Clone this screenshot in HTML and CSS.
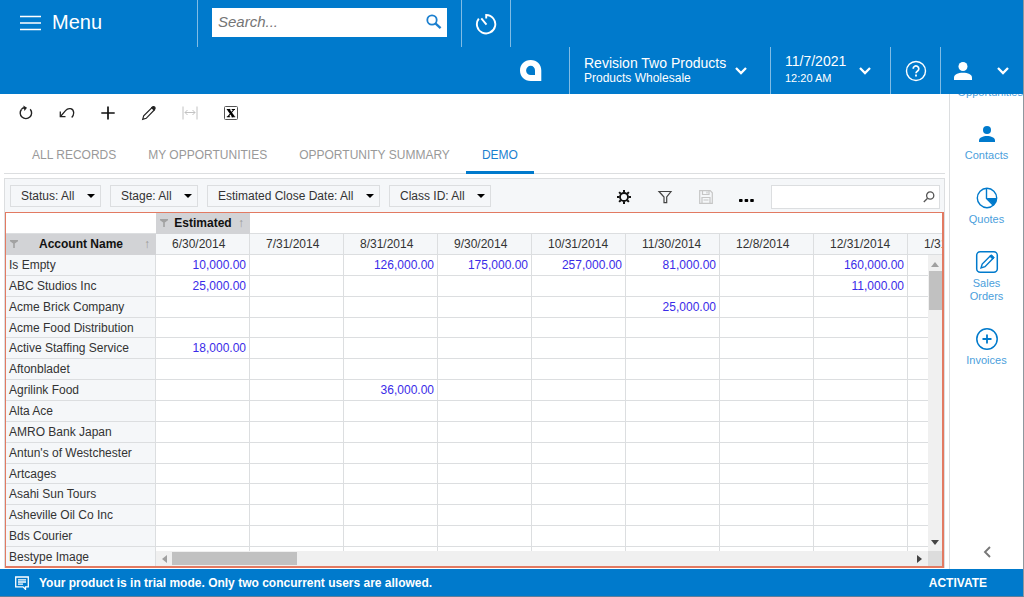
FILE: index.html
```html
<!DOCTYPE html>
<html lang="en">
<head>
<meta charset="utf-8">
<meta name="viewport" content="width=device-width, initial-scale=1">
<title>Opportunities</title>
<link rel="stylesheet" href="styles.css">
</head>
<body>
<div class="app">
  <header class="header">
    <div class="header-row header-top">
      <button class="menu-button" type="button">
        <svg width="21" height="16" viewBox="0 0 21 16" stroke="#fff" stroke-width="1.700"><path d="M0 1.500h21M0 8h21M0 14.500h21"/></svg>
        Menu
      </button>
      <div class="search-cell">
        <div class="search">
          <input class="search-input" type="text" placeholder="Search..." aria-label="Search">
          <svg width="16" height="16" viewBox="0 0 16 16" fill="none" stroke="#1b7fcf"><circle cx="6" cy="6" r="4.700" stroke-width="1.800"/><path d="M9.400 9.400l5.200 4.800" stroke-width="2.300"/></svg>
        </div>
      </div>
      <button class="history" type="button" aria-label="Recently visited">
        <svg width="22" height="22" viewBox="0 0 22 22" fill="none" stroke="#fff" stroke-width="1.900"><path d="M11.200 5.500V2A9.200 9.200 0 1 1 3.800 5.600M11.500 11.700L6.300 5.300"/></svg>
      </button>
    </div>
    <div class="header-row header-bottom">
      <svg class="brand" width="22" height="22" viewBox="0 0 22 22" fill="#fff" fill-rule="evenodd"><path d="M10.700 0C17 0 21.300 4.300 21.300 10.500V21H10.700C4.500 21 0 16.700 0 10.500S4.500 0 10.700 0zM10.700 5.800a4.600 4.600 0 0 0 0 9.200H15V10.400a4.400 4.400 0 0 0-4.300-4.600z"/></svg>
      <button class="company" type="button">
        <span class="two-line"><span class="line-main">Revision Two Products</span><span class="line-sub">Products Wholesale</span></span>
        <svg width="12" height="8" viewBox="0 0 12 8" fill="none" stroke="#fff" stroke-width="2.300"><path d="M1 1l5 5 5-5"/></svg>
      </button>
      <button class="date" type="button">
        <span class="two-line time-lines"><span class="line-main">11/7/2021</span><span class="line-time">12:20 AM</span></span>
        <svg width="12" height="8" viewBox="0 0 12 8" fill="none" stroke="#fff" stroke-width="2.300"><path d="M1 1l5 5 5-5"/></svg>
      </button>
      <button class="help" type="button" aria-label="Help">
        <svg width="22" height="22" viewBox="0 0 22 22" fill="none" stroke="#fff"><circle cx="11" cy="11" r="9.500" stroke-width="1.400"/><path d="M8.200 8.800a2.800 2.800 0 1 1 4.400 2.200c-1 .700-1.600 1.200-1.600 2.300" stroke-width="1.700"/><path d="M11 14.600v2" stroke-width="1.800"/></svg>
      </button>
      <button class="user" type="button" aria-label="User">
        <svg width="18" height="18" viewBox="0 0 18 18" fill="#fff"><circle cx="9" cy="4.500" r="4.500"/><path d="M0 18v-2.500C0 12.500 4 10.700 9 10.700s9 1.800 9 4.800V18z"/></svg>
        <svg width="12" height="8" viewBox="0 0 12 8" fill="none" stroke="#fff" stroke-width="2.300"><path d="M1 1l5 5 5-5"/></svg>
      </button>
    </div>
  </header>

  <div class="body">
    <main class="main">
      <div class="toolbar">
        <button type="button" aria-label="Refresh"><svg width="16" height="16" viewBox="0 0 16 16" fill="none" stroke="#222" stroke-width="1.400"><path d="M3.600 4.200A5.700 5.700 0 1 0 12.200 4.200"/><path d="M3.600 3.900C4.600 3 5.600 2.700 7 2.700"/><path d="M5.300.4L9 2.700 6.500 6z" fill="#222" stroke="none"/></svg></button>
        <button type="button" aria-label="Undo"><svg width="16" height="16" viewBox="0 0 16 16" fill="none" stroke="#222" stroke-width="1.300"><path d="M1.500 11.500L6.500 5.700C9.500 2 14.500 3.500 14.700 7.700c0 2-.7 3.500-2 4.800"/><path d="M1.300 6.500v5.200h5.200"/></svg></button>
        <button type="button" aria-label="Add"><svg width="16" height="16" viewBox="0 0 16 16" stroke="#111" stroke-width="1.700"><path d="M8 1.500v13M1.300 8h13.400"/></svg></button>
        <button type="button" aria-label="Edit"><svg width="16" height="16" viewBox="0 0 16 16" fill="none" stroke="#222" stroke-width="1.200"><path d="M1.700 14.300l1-3.600L11 2.600l2.300 2.300L5.200 13.300z"/><path d="M10.700 2.700c1-1.400 2.100-1.500 2.900-.7s.7 1.900-.6 3z" fill="#222"/></svg></button>
        <button type="button" aria-label="Fit width" disabled><svg width="16" height="16" viewBox="0 0 16 16" fill="none" stroke="#c2c2c2"><path d="M1 1.500v13M15 1.500v13M3 7.500h10M5.500 5L3 7.500 5.500 10M10.500 5L13 7.500 10.500 10"/></svg></button>
        <button type="button" aria-label="Export to Excel"><svg width="16" height="16" viewBox="0 0 16 16" fill="none" stroke="#555"><rect x="1.500" y="1.500" width="13" height="13" rx="1"/><path d="M5.300 4.500l5.200 7.200" stroke="#000" stroke-width="2.400"/><path d="M11 4.500L5 11.700M3.800 4.500h3.500M8.700 4.500h3.300M3.800 11.700h3.300M8.500 11.700h3.700" stroke="#000" stroke-width="1.100"/></svg></button>
      </div>
      <nav class="tabs">
        <a href="#">ALL RECORDS</a>
        <a href="#">MY OPPORTUNITIES</a>
        <a href="#">OPPORTUNITY SUMMARY</a>
        <a class="active" href="#" aria-current="page">DEMO</a>
      </nav>
      <section class="panel">
        <div class="filters">
          <div class="select"><select aria-label="Status"><option>Status: All</option></select></div>
          <div class="select"><select aria-label="Stage"><option>Stage: All</option></select></div>
          <div class="select"><select aria-label="Estimated Close Date"><option>Estimated Close Date: All</option></select></div>
          <div class="select"><select aria-label="Class ID"><option>Class ID: All</option></select></div>
          <div class="tools">
            <button type="button" aria-label="Settings"><svg width="16" height="16" viewBox="0 0 16 16" fill="none" stroke="#111"><circle cx="8" cy="8" r="4" stroke-width="1.800"/><path d="M8 1v2.500M8 12.500V15M1 8h2.500M12.500 8H15M3.100 3.100l1.700 1.700M11.200 11.200l1.700 1.700M3.100 12.900l1.700-1.700M11.200 4.800l1.700-1.700" stroke-width="2"/></svg></button>
            <button type="button" aria-label="Filter"><svg width="16" height="16" viewBox="0 0 16 16" fill="none" stroke="#444" stroke-width="1.200"><path d="M2 2.500h12L9.700 8v5.700H7V8z"/></svg></button>
            <button type="button" aria-label="Save" disabled><svg width="16" height="16" viewBox="0 0 16 16" fill="none" stroke="#c6c6c6" stroke-width="1.200"><path d="M1.700 1.700h10.500l2.100 2.100v10.500H1.700z"/><path d="M4.500 2v3.500h6.500V2M9 2.500v2M4 14V8.500h8V14M5.500 11h5"/></svg></button>
            <button type="button" aria-label="More"><svg width="16" height="16" viewBox="0 0 16 16" fill="#000"><rect x="0" y="10" width="3.600" height="3" rx=".8"/><rect x="5.600" y="10" width="3.600" height="3" rx=".8"/><rect x="11.200" y="10" width="3.600" height="3" rx=".8"/></svg></button>
          </div>
          <div class="find">
            <input type="text" aria-label="Find in table">
            <svg width="12" height="12" viewBox="0 0 12 12" fill="none" stroke="#555" stroke-width="1.300"><circle cx="7.200" cy="4.500" r="3.600"/><path d="M4.600 7.200L.8 11"/></svg>
          </div>
        </div>
        <div class="grid">
          <table class="pivot">
            <colgroup><col class="name-col"><col><col><col><col><col><col><col><col><col></colgroup>
            <thead>
              <tr class="measure">
                <td></td>
                <th scope="col" class="field"><span class="field-head"><svg width="8" height="8" viewBox="0 0 8 8" fill="#a2a2a2"><path d="M0 0h8v1.300L4.800 3.500V8H3.200V3.500L0 1.300z"/></svg><b>Estimated</b><i>↑</i></span></th>
                <td colspan="8"></td>
              </tr>
              <tr class="dates">
                <th scope="col" class="field"><span class="field-head"><svg width="8" height="8" viewBox="0 0 8 8" fill="#a2a2a2"><path d="M0 0h8v1.300L4.800 3.500V8H3.200V3.500L0 1.300z"/></svg><b>Account Name</b><i>↑</i></span></th>
                <th scope="col">6/30/2014</th><th scope="col">7/31/2014</th><th scope="col">8/31/2014</th><th scope="col">9/30/2014</th><th scope="col">10/31/2014</th><th scope="col">11/30/2014</th><th scope="col">12/8/2014</th><th scope="col">12/31/2014</th><th scope="col">1/31</th>
              </tr>
            </thead>
            <tbody>
              <tr><th scope="row">Is Empty</th><td>10,000.00</td><td></td><td>126,000.00</td><td>175,000.00</td><td>257,000.00</td><td>81,000.00</td><td></td><td>160,000.00</td><td></td></tr>
              <tr><th scope="row">ABC Studios Inc</th><td>25,000.00</td><td></td><td></td><td></td><td></td><td></td><td></td><td>11,000.00</td><td></td></tr>
              <tr><th scope="row">Acme Brick Company</th><td></td><td></td><td></td><td></td><td></td><td>25,000.00</td><td></td><td></td><td></td></tr>
              <tr><th scope="row">Acme Food Distribution</th><td></td><td></td><td></td><td></td><td></td><td></td><td></td><td></td><td></td></tr>
              <tr><th scope="row">Active Staffing Service</th><td>18,000.00</td><td></td><td></td><td></td><td></td><td></td><td></td><td></td><td></td></tr>
              <tr><th scope="row">Aftonbladet</th><td></td><td></td><td></td><td></td><td></td><td></td><td></td><td></td><td></td></tr>
              <tr><th scope="row">Agrilink Food</th><td></td><td></td><td>36,000.00</td><td></td><td></td><td></td><td></td><td></td><td></td></tr>
              <tr><th scope="row">Alta Ace</th><td></td><td></td><td></td><td></td><td></td><td></td><td></td><td></td><td></td></tr>
              <tr><th scope="row">AMRO Bank Japan</th><td></td><td></td><td></td><td></td><td></td><td></td><td></td><td></td><td></td></tr>
              <tr><th scope="row">Antun's of Westchester</th><td></td><td></td><td></td><td></td><td></td><td></td><td></td><td></td><td></td></tr>
              <tr><th scope="row">Artcages</th><td></td><td></td><td></td><td></td><td></td><td></td><td></td><td></td><td></td></tr>
              <tr><th scope="row">Asahi Sun Tours</th><td></td><td></td><td></td><td></td><td></td><td></td><td></td><td></td><td></td></tr>
              <tr><th scope="row">Asheville Oil Co Inc</th><td></td><td></td><td></td><td></td><td></td><td></td><td></td><td></td><td></td></tr>
              <tr><th scope="row">Bds Courier</th><td></td><td></td><td></td><td></td><td></td><td></td><td></td><td></td><td></td></tr>
              <tr><th scope="row">Bestype Image</th><td></td><td></td><td></td><td></td><td></td><td></td><td></td><td></td><td></td></tr>
            </tbody>
          </table>
          <div class="vscroll" aria-hidden="true">
            <svg width="8" height="5" viewBox="0 0 8 5" fill="#a0a0a0"><path d="M0 5l4-5 4 5z"/></svg>
            <span class="vthumb"></span>
            <svg width="8" height="5" viewBox="0 0 8 5" fill="#444"><path d="M0 0l4 5 4-5z"/></svg>
          </div>
          <div class="hscroll" aria-hidden="true">
            <svg width="5" height="8" viewBox="0 0 5 8" fill="#a0a0a0"><path d="M5 0L0 4l5 4z"/></svg>
            <span class="hthumb"></span>
            <svg width="5" height="8" viewBox="0 0 5 8" fill="#444"><path d="M0 0l5 4-5 4z"/></svg>
          </div>
          <span class="corner"></span>
        </div>
      </section>
    </main>
    <aside class="side">
      <a class="clipped" href="#">Opportunities</a>
      <a href="#"><svg width="24" height="24" viewBox="0 0 24 24" fill="#007acc"><circle cx="12" cy="8" r="4"/><path d="M4 20v-1.500C4 15.500 8 14 12 14s8 1.500 8 4.500V20z"/></svg>Contacts</a>
      <a href="#"><svg width="24" height="24" viewBox="0 0 24 24"><circle cx="12" cy="12" r="9.700" fill="#fff" stroke="#007acc" stroke-width="1.400"/><path d="M11.500 2v10.500l7 7" fill="none" stroke="#007acc" stroke-width="1.400"/><path d="M11.500 12H21.700c0 3-1.300 5.500-3.300 7z" fill="#007acc"/></svg>Quotes</a>
      <a href="#"><svg width="24" height="24" viewBox="0 0 24 24" fill="none" stroke="#007acc"><rect x="1.700" y="1.700" width="20.600" height="20.600" rx="3.500" stroke-width="1.500"/><path d="M6 18l1.200-4L15.500 5.700l2.700 2.600L10 16.700z" stroke-width="1.400"/><path d="M14.800 6.300l1.700-1.500 2.700 2.700-1.500 1.600z" fill="#007acc"/></svg>Sales Orders</a>
      <a href="#"><svg width="24" height="24" viewBox="0 0 24 24" fill="none" stroke="#007acc" stroke-width="1.500"><circle cx="12" cy="12" r="10.200"/><path d="M12 7.500v9M7.500 12h9" stroke-width="1.800"/></svg>Invoices</a>
      <button class="collapse" type="button" aria-label="Collapse"><svg width="8" height="12" viewBox="0 0 8 12" fill="none" stroke="#777" stroke-width="1.900"><path d="M7 1L2 6l5 5"/></svg></button>
    </aside>
  </div>

  <footer class="footer">
    <svg width="14" height="14" viewBox="0 0 14 14" fill="none" stroke="#fff" stroke-width="1.300"><path d="M.7 1h12.600v9.800h-2.800v2.500L8 10.800H.7zM3 3.800h8M3 6h8M3 8.200h5"/></svg>
    <span>Your product is in trial mode. Only two concurrent users are allowed.</span>
    <button class="activate" type="button">ACTIVATE</button>
  </footer>
</div>
</body>
</html>
```

FILE: styles.css
```css
* { box-sizing: border-box; }
body {
  margin: 0;
  font-family: "Liberation Sans", Arial, sans-serif;
  font-size: 12px;
  color: #333;
  background: #fff;
}
svg { display: block; flex: none; }
button, input, select { font: inherit; color: inherit; }
button { border: 0; padding: 0; background: none; }
a { text-decoration: none; }

.app {
  display: flex;
  flex-direction: column;
  height: 100vh;
  border-right: 1px solid #8f979e;
  border-bottom: 1px solid #5b7f9c;
}

/* Header */
.header { background: #007acc; color: #fff; flex: none; }
.header-row { display: flex; height: 47px; }
.header-row > * { flex: none; }
.menu-button {
  display: flex;
  align-items: center;
  gap: 11px;
  width: 197px;
  padding: 0 0 2px 20px;
  font-size: 20px;
}
.search-cell {
  padding: 8px 14px 0;
  border-left: 1px solid #80bce5;
  border-right: 1px solid #80bce5;
}
.search {
  display: flex;
  align-items: center;
  width: 235px;
  height: 29px;
  padding: 0 5px 2px 6px;
  background: #fff;
}
.search-input {
  flex: 1;
  min-width: 0;
  border: 0;
  padding: 0;
  background: none;
  color: #333;
  font-size: 15px;
}
.search-input::placeholder { color: #757575; font-style: italic; }
.history {
  display: grid;
  place-items: center;
  width: 49px;
  border-right: 1px solid #80bce5;
}
.header-bottom { justify-content: flex-end; align-items: stretch; }
.brand { align-self: center; margin-right: 27px; }
.company, .date, .help, .user {
  display: flex;
  align-items: center;
  border-left: 1px solid #80bce5;
  text-align: left;
}
.company { gap: 9px; width: 201px; padding-left: 14px; }
.date { gap: 13px; width: 120px; padding-left: 14px; }
.help { justify-content: center; width: 50px; }
.user { gap: 25px; width: 83px; padding-left: 13px; }
.two-line { display: flex; flex-direction: column; padding-bottom: 2px; }
.line-main { font-size: 14px; line-height: 16px; }
.line-sub { font-size: 12px; line-height: 14px; }
.line-time { font-size: 11px; line-height: 18px; }

/* Page body */
.body { display: flex; flex: 1; min-height: 0; }
.main {
  display: flex;
  flex: 1;
  flex-direction: column;
  min-width: 0;
  padding: 0 4px 1px;
}
.toolbar { display: flex; gap: 25px; padding: 11px 0 0 14px; flex: none; }
.tabs {
  display: flex;
  flex: none;
  margin-top: 19px;
  padding-left: 12px;
  border-bottom: 1px solid #dcdee0;
}
.tabs a {
  margin-bottom: -1px;
  padding: 0 16px;
  border-bottom: 3px solid transparent;
  color: #999;
  line-height: 31px;
}
.tabs .active { color: #1b7fcf; border-color: #007acc; }

.panel {
  display: flex;
  flex: 1;
  flex-direction: column;
  min-height: 0;
  margin-top: 4px;
  border: 1px solid #dcdee0;
  border-bottom: 0;
  background: #f5f7f9;
}
.filters { display: flex; flex: none; gap: 9px; padding: 6px 4px 3px 5px; }
.select { position: relative; flex: none; height: 23px; }
.select select {
  height: 22px;
  padding: 0 24px 0 10px;
  border: 1px solid #dcdee0;
  border-radius: 0;
  background: #f5f7f9;
  appearance: none;
}
.select::after {
  content: "";
  position: absolute;
  top: 9px;
  right: 6px;
  border: 4px solid transparent;
  border-top-color: #000;
  border-bottom: 0;
  pointer-events: none;
}
.tools { display: flex; gap: 25px; align-items: center; margin-left: auto; padding-right: 7px; }
.find {
  display: flex;
  align-items: center;
  width: 169px;
  height: 24px;
  padding: 0 4px;
  border: 1px solid #dcdee0;
  background: #fff;
}
.find input { flex: 1; min-width: 0; border: 0; background: none; }

/* Pivot grid */
.grid {
  position: relative;
  flex: 1;
  min-height: 0;
  overflow: hidden;
  border: 2px solid #e27a62;
  border-left-width: 1px;
  border-top-width: 1px;
  background: #fff;
}
.pivot {
  width: 996px;
  height: calc(100% + 2px);
  table-layout: fixed;
  border-collapse: separate;
  border-spacing: 0;
}
.name-col { width: 150px; }
.pivot thead tr { height: 21px; }
.pivot th, .pivot td {
  padding: 0 3px;
  border-right: 1px solid #dcdee0;
  border-bottom: 1px solid #dcdee0;
  line-height: 18px;
  white-space: nowrap;
}
.pivot td { text-align: right; color: #3a2be8; }
.pivot th { font-weight: normal; text-align: left; background: #f5f7f9; }
.pivot .measure td { border-right: 0; }
.pivot .dates th { padding-left: 16px; }
.pivot .measure .field, .pivot .dates .field {
  padding: 0 5px 0 4px;
  border-color: #d2d3d6;
  background: #d2d3d6;
  color: #111;
}
.field-head { display: flex; align-items: center; justify-content: space-between; }
.field-head i { font-style: normal; color: #999; }
.vscroll, .hscroll {
  position: absolute;
  display: flex;
  align-items: center;
  background: #f0f0f0;
}
.vscroll { top: 42px; right: 0; bottom: 15px; width: 14px; flex-direction: column; padding: 7px 0 6px; }
.hscroll { left: 150px; right: 14px; bottom: 0; height: 15px; padding: 0 6px; }
.vthumb { width: 13px; height: 39px; margin: 4px 0 auto; background: #c1c1c1; }
.hthumb { width: 125px; height: 13px; margin: 0 auto 0 5px; background: #c1c1c1; }
.corner { position: absolute; right: 0; bottom: 0; width: 14px; height: 15px; background: #dcdcdc; }

/* Side panel */
.side {
  display: flex;
  flex: none;
  flex-direction: column;
  align-items: center;
  width: 74px;
  overflow: hidden;
  border-left: 1px solid #dcdee0;
  font-size: 11px;
}
.side a {
  display: flex;
  flex-direction: column;
  align-items: center;
  gap: 3px;
  width: 48px;
  margin-bottom: 24px;
  color: #4ba0dc;
  line-height: 13px;
  text-align: center;
}
.side .clipped { align-self: flex-end; width: auto; margin: -8px 0 23px; }
.collapse { margin: auto 0 11px; }

/* Footer */
.footer {
  display: flex;
  flex: none;
  align-items: center;
  gap: 10px;
  height: 27px;
  padding: 0 36px 0 15px;
  background: #007acc;
  color: #fff;
  font-weight: bold;
}
.activate { margin-left: auto; }
```
